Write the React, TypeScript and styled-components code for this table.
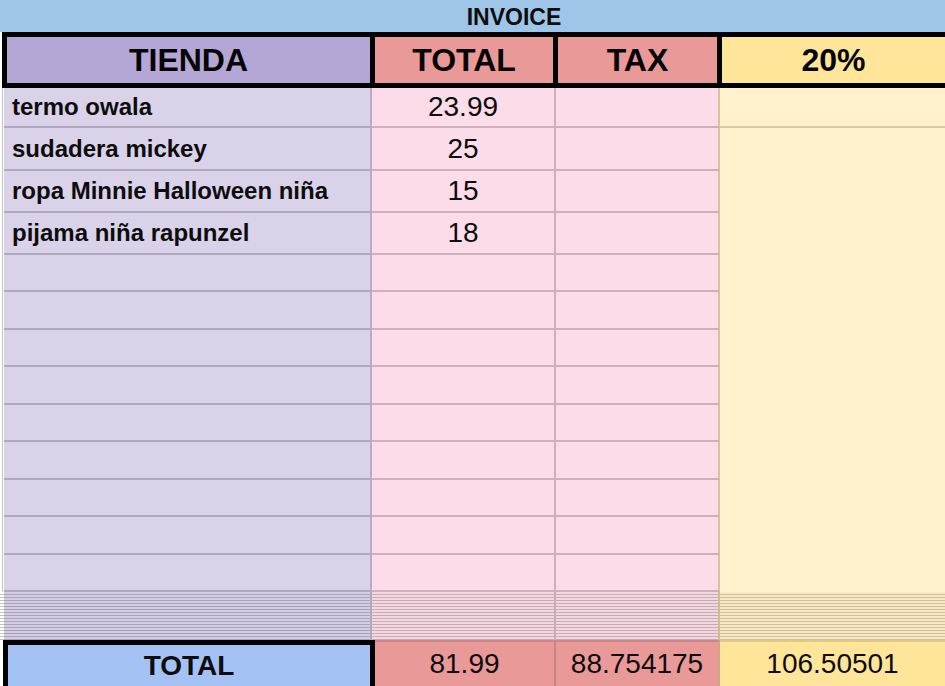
import React from 'react';
import styled, { createGlobalStyle } from 'styled-components';

const GlobalStyle = createGlobalStyle`
	html, body {
		margin: 0;
		padding: 0;
		background: #fff;
	}
	body {
		font-family: 'Liberation Sans', Arial, sans-serif;
		color: #0d0d0d;
	}
`;

const ITEMS = [
	{ id: 'owala', name: 'termo owala', total: '23.99' },
	{ id: 'mickey', name: 'sudadera mickey', total: '25' },
	{ id: 'minnie', name: 'ropa Minnie Halloween niña', total: '15' },
	{ id: 'rapunzel', name: 'pijama niña rapunzel', total: '18' },
];

const EMPTY_ROWS = 9;

const STRIPES = {
	gutter: ['#ffffff', '#c4c4c4'],
	purple: ['#d5cde4', '#aaa2ba'],
	pink: ['#f3d7e1', '#c8abb7'],
	yellow: ['#f6e9c4', '#d0bf98'],
};

type Tone = keyof typeof STRIPES;

const App = () => {
	const rows = [...ITEMS, ...Array.from({ length: EMPTY_ROWS }, (_, i) => ({ id: `empty-${i}`, name: '', total: '' }))];

	return (
		<>
			<GlobalStyle />
			<Sheet>
				<TitleBar>INVOICE</TitleBar>
				<HeaderRow>
					<HeaderCell $bg="#b4a7d6">TIENDA</HeaderCell>
					<HeaderCell $bg="#ea9999">TOTAL</HeaderCell>
					<HeaderCell $bg="#ea9999">TAX</HeaderCell>
					<HeaderCell $bg="#ffe599">20%</HeaderCell>
				</HeaderRow>
				<Body>
					<Gutter />
					{rows.map(({ id, name, total }, i) => (
						<React.Fragment key={id}>
							<NameCell>{name}</NameCell>
							<AmountCell $col={3}>{total}</AmountCell>
							<AmountCell $col={4} $last />
							{i === 0 && <PctCell $first />}
							{i === 1 && <PctCell />}
						</React.Fragment>
					))}
				</Body>
				<StripeRow>
					<Stripes $tone="gutter" />
					<Stripes $tone="purple" $line="#b1a7bf" />
					<Stripes $tone="pink" $line="#c8abb7" />
					<Stripes $tone="pink" $line="#cfba9a" />
					<Stripes $tone="yellow" />
				</StripeRow>
				<TotalRow>
					<span />
					<TotalLabel>TOTAL</TotalLabel>
					<TotalValue $bg="#ea9999" $line="#c98484">81.99</TotalValue>
					<TotalValue $bg="#ea9999" $line="#cfa58c">88.754175</TotalValue>
					<TotalValue $bg="#ffe599">106.50501</TotalValue>
				</TotalRow>
			</Sheet>
		</>
	);
};

const Sheet = styled.div`
	width: 945px;
	height: 686px;
	overflow: hidden;
	display: flex;
	flex-direction: column;
`;

const TitleBar = styled.div`
	flex: 0 0 32px;
	display: flex;
	align-items: center;
	justify-content: center;
	padding-left: 83px;
	padding-top: 2px;
	box-sizing: border-box;
	background: #9fc5e8;
	font-size: 23px;
	font-weight: 700;
`;

const HeaderRow = styled.div`
	flex: 0 0 56px;
	box-sizing: border-box;
	margin-left: 2px;
	display: grid;
	grid-template-columns: 363px 178px 159px 1fr;
	gap: 5px;
	padding: 5px 0 5px 5px;
	background: #000;
`;

const HeaderCell = styled.div<{ $bg: string }>`
	display: flex;
	align-items: center;
	justify-content: center;
	background: ${(p) => p.$bg};
	font-size: 32px;
	font-weight: 700;
	color: #050505;
`;

const Body = styled.div`
	flex: 0 0 504px;
	display: grid;
	grid-template-columns: 4px 368px 184px 164px 1fr;
	grid-template-rows: 40px 43px 42px 42px repeat(9, 1fr);
`;

const Gutter = styled.div`
	grid-column: 1;
	grid-row: 1 / -1;
	background: linear-gradient(to right, #fff 0 2px, #c4c4c4 2px 3px, #fff 3px);
`;

const NameCell = styled.div`
	grid-column: 2;
	display: flex;
	align-items: center;
	padding-left: 8px;
	box-sizing: border-box;
	background: #d9d2e9;
	border-right: 2px solid #b9adc4;
	border-bottom: 2px solid #b1a8c0;
	font-size: 24px;
	font-weight: 700;
	white-space: nowrap;
`;

const AmountCell = styled.div<{ $col: number; $last?: boolean }>`
	grid-column: ${(p) => p.$col};
	display: flex;
	align-items: center;
	justify-content: center;
	background: #fbdce8;
	border-right: 2px solid ${(p) => (p.$last ? '#d6c1a3' : '#cdb0bc')};
	border-bottom: 2px solid #cdb0bc;
	font-size: 28px;
`;

const PctCell = styled.div<{ $first?: boolean }>`
	grid-column: 5;
	grid-row: ${(p) => (p.$first ? '1' : '2 / span 12')};
	background: #fff2cc;
	border-bottom: ${(p) => (p.$first ? '2px solid #dccaa5' : 'none')};
`;

const StripeRow = styled.div`
	flex: 0 0 48px;
	display: grid;
	grid-template-columns: 4px 368px 184px 164px 1fr;
`;

const Stripes = styled.div<{ $tone: Tone; $line?: string }>`
	background: repeating-linear-gradient(
		to bottom,
		${(p) => STRIPES[p.$tone][0]} 0 2px,
		${(p) => STRIPES[p.$tone][1]} 2px 3px
	);
	border-right: ${(p) => (p.$line ? `2px solid ${p.$line}` : 'none')};
`;

const TotalRow = styled.div`
	flex: 0 0 50px;
	display: grid;
	grid-template-columns: 3px 372px 181px 164px 1fr;
`;

const TotalLabel = styled.div`
	display: flex;
	align-items: center;
	justify-content: center;
	box-sizing: border-box;
	background: #a4c2f4;
	border: 5px solid #000;
	border-bottom: none;
	font-size: 28px;
	font-weight: 700;
	padding-bottom: 4px;
`;

const TotalValue = styled.div<{ $bg: string; $line?: string }>`
	display: flex;
	align-items: center;
	justify-content: center;
	background: ${(p) => p.$bg};
	border-top: 2px solid rgba(0, 0, 0, 0.12);
	border-right: ${(p) => (p.$line ? `2px solid ${p.$line}` : 'none')};
	font-size: 28px;
	padding-bottom: 4px;
`;

export default App;
